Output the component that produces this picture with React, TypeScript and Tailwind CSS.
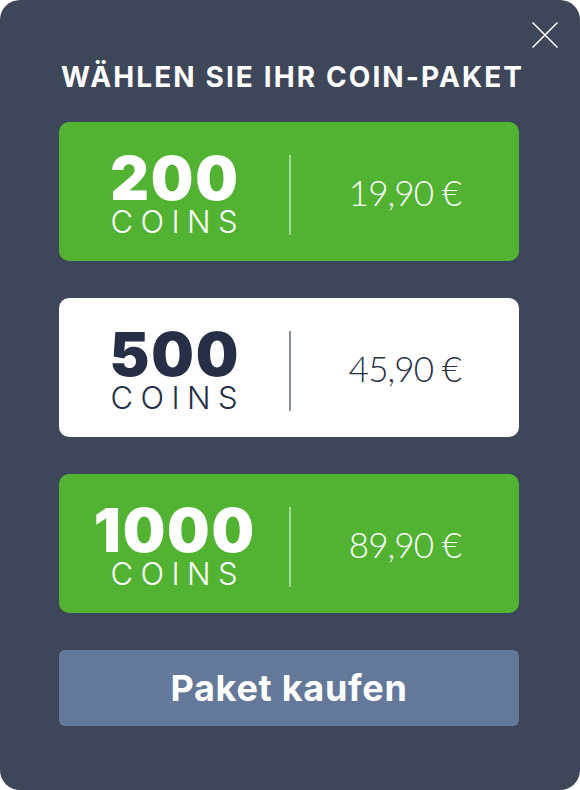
interface Pack {
  coins: string;
  price: string;
  light?: boolean;
}

const packs: Pack[] = [
  { coins: "200", price: "19,90 €" },
  { coins: "500", price: "45,90 €", light: true },
  { coins: "1000", price: "89,90 €" },
];

const PackCard: React.FC<{ pack: Pack }> = ({ pack }) => {
  const text = pack.light ? "text-[#262f46]" : "text-white";
  return (
    <div
      className={`h-[139px] rounded-[10px] grid grid-cols-[230px_2px_1fr] ${
        pack.light ? "bg-white" : "bg-[#52b332]"
      }`}
    >
      <div className={`flex flex-col items-center pt-[28px] ${text}`}>
        <div className="text-[60px] leading-[56px] font-black tracking-[0.03em] pl-[0.03em]">
          {pack.coins}
        </div>
        <div className="text-[31px] leading-[31px] font-light tracking-[0.24em] pl-[0.24em]">
          COINS
        </div>
      </div>
      <div
        className={`mt-[33px] h-[80px] w-[2px] ${
          pack.light ? "bg-[#8a909e]" : "bg-[#a6d89a]"
        }`}
      />
      <div
        className={`pt-[53px] text-center text-[35px] leading-[35px] font-light tracking-[-0.025em] ${text}`}
        style={{ fontFamily: "Lato, sans-serif" }}
      >
        {pack.price}
      </div>
    </div>
  );
};

export default function App() {
  return (
    <div
      className="relative w-[580px] h-[790px] rounded-[20px] bg-[#3e4659] pl-[59px] pr-[61px] pt-[63px]"
      style={{ fontFamily: "Inter, 'Noto Sans', sans-serif" }}
    >
      <button className="absolute top-[22px] left-[532px] text-white">
        <svg width="26" height="26" viewBox="0 0 26 26" fill="none">
          <path d="M0.5 0.5 L25.5 25.5 M25.5 0.5 L0.5 25.5" stroke="currentColor" strokeWidth="1.5" />
        </svg>
      </button>
      <h1 className="-mr-[2px] text-center text-white text-[28px] leading-[28px] font-bold tracking-[0.075em] pl-[0.075em] whitespace-nowrap">
        WÄHLEN SIE IHR COIN-PAKET
      </h1>
      <div className="mt-[31px] flex flex-col gap-[37px]">
        {packs.map((p) => (
          <PackCard key={p.coins} pack={p} />
        ))}
        <button className="h-[76px] rounded-[6px] bg-[#64799a] text-white text-[36px] font-bold tracking-[0.02em]">
          Paket kaufen
        </button>
      </div>
    </div>
  );
}
